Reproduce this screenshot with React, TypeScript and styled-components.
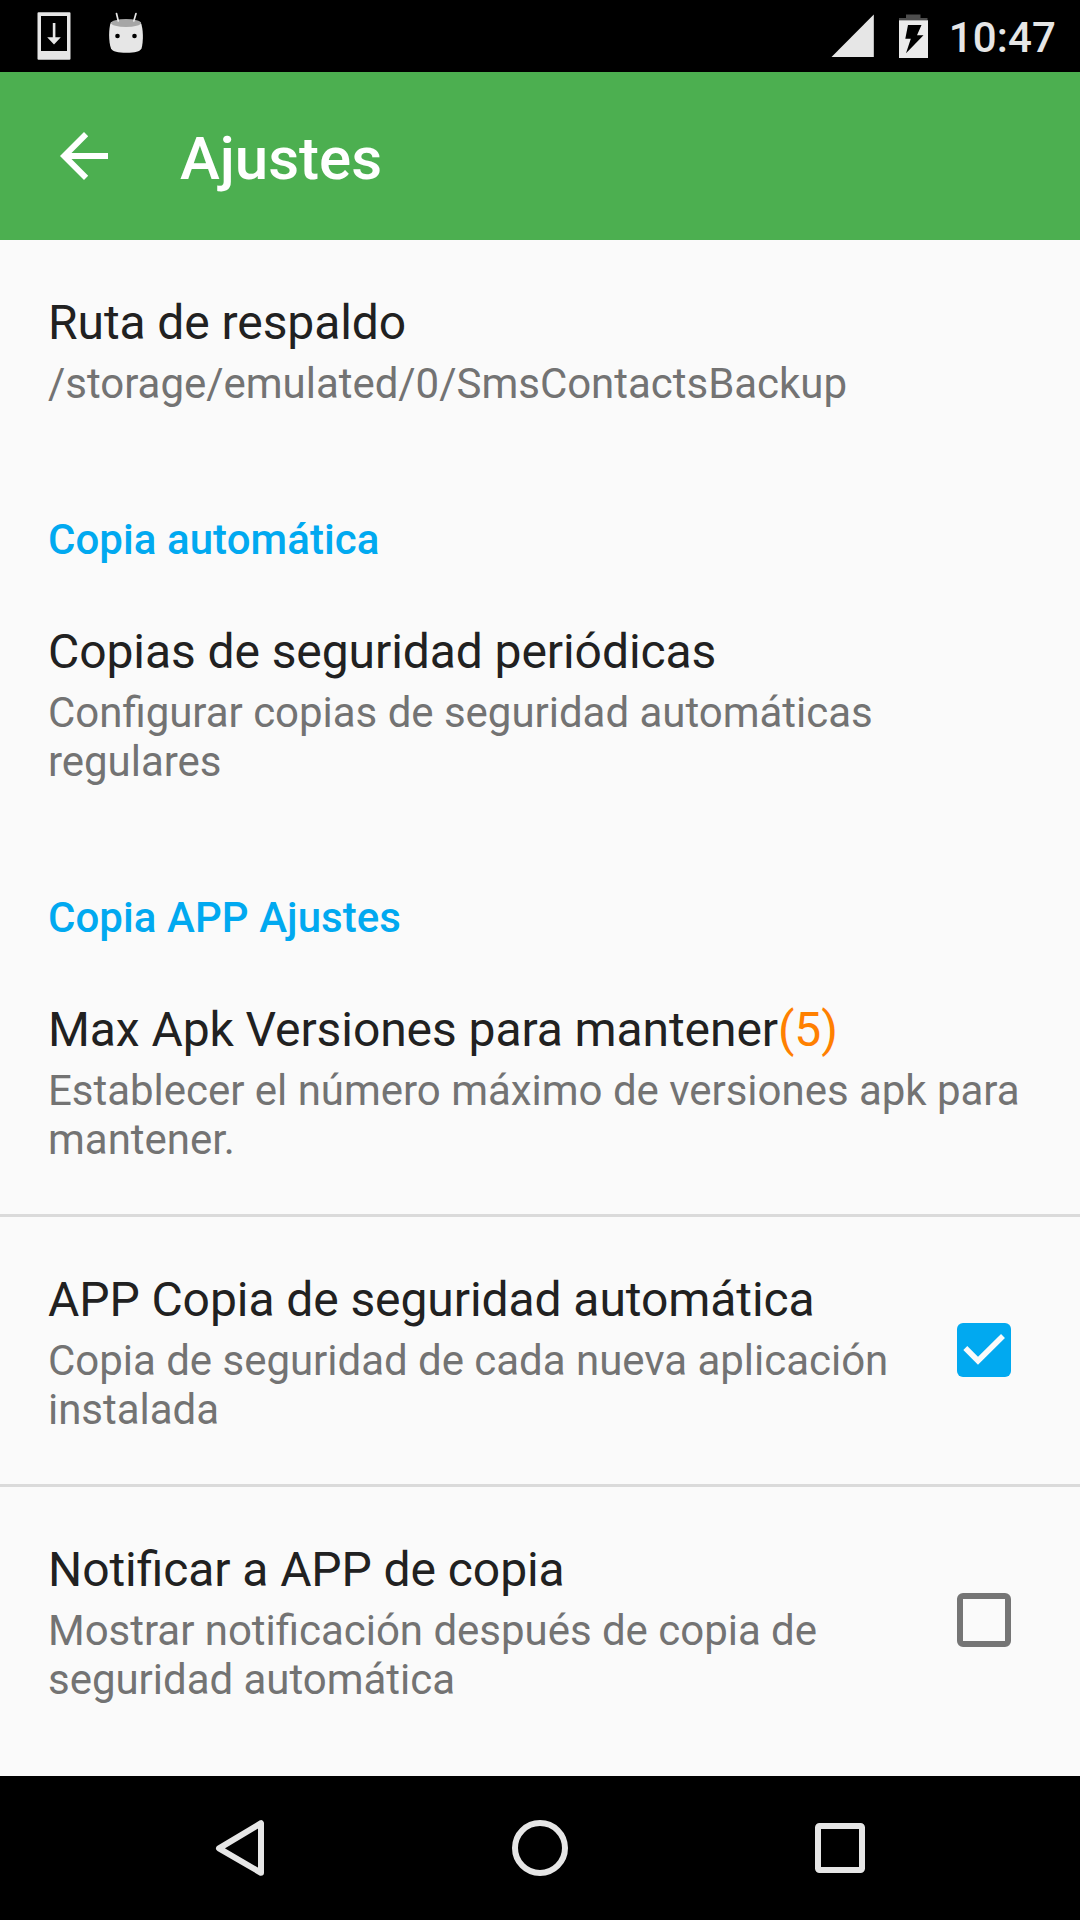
import React from "react";
import styled, { createGlobalStyle } from "styled-components";

const GlobalStyle = createGlobalStyle`
  body {
    margin: 0;
    background: #fafafa;
    font-family: Roboto, "Noto Sans", sans-serif;
    font-feature-settings: "liga" 1;
  }
`;

const Screen = styled.div`
  display: flex;
  flex-direction: column;
  width: 1080px;
  height: 1920px;
  overflow: hidden;
  background: #fafafa;
`;

const StatusBar = styled.header`
  display: flex;
  flex: none;
  align-items: center;
  justify-content: space-between;
  height: 72px;
  background: #000;
  color: #e6e6e6;
`;

const StatusGroup = styled.div`
  display: flex;
  align-items: center;
  height: 72px;
`;

const Clock = styled.span`
  font-size: 42px;
  line-height: 50px;
  font-weight: 500;
  letter-spacing: 0.15px;
  padding: 4px 24px 0 0;
`;

const Icon = styled.svg`
  display: block;
  flex: none;
`;

const Toolbar = styled.div`
  display: flex;
  flex: none;
  align-items: center;
  height: 168px;
  background: #4caf50;
  color: #fff;
`;

const BackButton = styled.button`
  display: flex;
  align-items: center;
  justify-content: center;
  width: 168px;
  height: 168px;
  padding: 0;
  border: 0;
  background: none;
  color: inherit;
`;

const Heading = styled.h1`
  margin: 0 0 0 12px;
  padding-top: 6px;
  font-size: 60px;
  line-height: 70px;
  font-weight: 500;
`;

const List = styled.main`
  flex: 1;
  min-height: 0;
  overflow: hidden;
`;

const Category = styled.h2`
  margin: 0;
  padding: 57px 48px 5px;
  font-size: 42px;
  line-height: 49px;
  font-weight: 500;
  letter-spacing: 0.06px;
  color: #01a9f0;
`;

const Row = styled.section<{ $divided?: boolean }>`
  display: flex;
  align-items: center;
  padding: 54px 48px 50px;
  border-bottom: ${(p) => (p.$divided ? "3px solid #dadada" : "0")};
`;

const RowText = styled.div`
  flex: 1;
`;

const Title = styled.div`
  font-size: 48px;
  line-height: 57px;
  letter-spacing: -0.08px;
  color: #212121;
`;

const Count = styled.span`
  color: #ff8000;
`;

const Summary = styled.div`
  padding-top: 8px;
  font-size: 42px;
  line-height: 49px;
  letter-spacing: -0.025px;
  color: #737373;
`;

const CheckSlot = styled.div`
  display: flex;
  flex: none;
  justify-content: flex-end;
  width: 96px;
  padding: 0 21px 5px 0;
`;

const CheckBox = styled.div<{ $checked: boolean }>`
  box-sizing: border-box;
  width: 54px;
  height: 54px;
  border-radius: 6px;
  border: ${(p) => (p.$checked ? "0" : "6px solid #757575")};
  background: ${(p) => (p.$checked ? "#01a9f0" : "transparent")};
`;

const NavBar = styled.nav`
  display: flex;
  flex: none;
  justify-content: center;
  height: 144px;
  background: #000;
`;

const NavButton = styled.button`
  display: flex;
  align-items: center;
  justify-content: center;
  width: 300px;
  padding: 0;
  border: 0;
  background: none;
`;

type SettingProps = {
  title: string;
  count?: string;
  lines: string[];
  divided?: boolean;
  checked?: boolean;
};

function Setting({ title, count, lines, divided, checked }: SettingProps) {
  return (
    <Row $divided={divided}>
      <RowText>
        <Title>
          {title}
          {count && <Count>{count}</Count>}
        </Title>
        <Summary>
          {lines.map((line) => (
            <div key={line}>{line}</div>
          ))}
        </Summary>
      </RowText>
      {checked !== undefined && (
        <CheckSlot>
          <CheckBox $checked={checked} role="checkbox" aria-checked={checked}>
            {checked && (
              <Icon width="54" height="54" viewBox="0 0 54 54">
                <path d="M8.300 25 21 37.700 46 12.900" fill="none" stroke="#fafafa" strokeWidth="5.600" />
              </Icon>
            )}
          </CheckBox>
        </CheckSlot>
      )}
    </Row>
  );
}

export default function App() {
  return (
    <>
      <GlobalStyle />
      <Screen>
        <StatusBar>
          <StatusGroup>
            <Icon width="160" height="72" viewBox="0 0 160 72">
              <path fill="#e6e6e6" fillRule="evenodd" d="M38.500 12.300h31a1 1 0 0 1 1 1v45.400a1 1 0 0 1-1 1h-31a1 1 0 0 1-1-1V13.300a1 1 0 0 1 1-1ZM41 16v35h26V16Z" />
              <path fill="#e6e6e6" d="M52.800 23h2.600v14.300h5.400L54 44.500l-6.800-7.200h5.600Z" />
              <path fill="#e6e6e6" d="M111 22C108.500 28 108.500 42 111 48.500c1.500 3 7 4.300 15.500 4.300s13.500-1.300 15-4.300c2-6.500 2-20.500-1-26.500Z" />
              <ellipse cx="126" cy="23" rx="15" ry="4" fill="#a6a6a6" />
              <path d="m116.500 13.500 1.800 7.500M136 13.500l-2.200 7.500" stroke="#e6e6e6" strokeWidth="1.700" strokeLinecap="round" />
              <circle cx="117.500" cy="36" r="2.300" />
              <circle cx="134.500" cy="36" r="2.300" />
            </Icon>
          </StatusGroup>
          <StatusGroup>
            <Icon width="119" height="72" viewBox="0 0 119 72">
              <path d="M1.500 57 43.800 14.400V57Z" fill="#e6e6e6" />
              <path d="M69 20v-2h7v-3.500h14.500V18h7v2Z" fill="#4d4d4d" />
              <path d="M69 20.300h29V58H69Z" fill="#ebebeb" />
              <path d="M78 25h13.500l-4.500 10.300h6.500L76 53.300l4.800-14.600h-5.500Z" />
            </Icon>
            <Clock>10:47</Clock>
          </StatusGroup>
        </StatusBar>

        <Toolbar>
          <BackButton aria-label="Atrás">
            <Icon width="48" height="48" viewBox="0 0 48 48">
              <path d="M48 21v6H11.500l16.700 16.800L24 48 0 24 24 0l4.200 4.200L11.500 21Z" fill="#fff" />
            </Icon>
          </BackButton>
          <Heading>Ajustes</Heading>
        </Toolbar>

        <List>
          <Setting title="Ruta de respaldo" lines={["/storage/emulated/0/SmsContactsBackup"]} />
          <Category>Copia automática</Category>
          <Setting
            title="Copias de seguridad periódicas"
            lines={["Configurar copias de seguridad automáticas", "regulares"]}
          />
          <Category>Copia APP Ajustes</Category>
          <Setting
            title="Max Apk Versiones para mantener"
            count="(5)"
            lines={["Establecer el número máximo de versiones apk para", "mantener."]}
            divided
          />
          <Setting
            title="APP Copia de seguridad automática"
            lines={["Copia de seguridad de cada nueva aplicación", "instalada"]}
            divided
            checked
          />
          <Setting
            title="Notificar a APP de copia"
            lines={["Mostrar notificación después de copia de", "seguridad automática"]}
            checked={false}
          />
        </List>

        <NavBar>
          <NavButton aria-label="Atrás">
            <Icon width="60" height="60" viewBox="0 0 60 60">
              <path d="M51 5.200v49.600L9 30.300Z" fill="none" stroke="#e6e6e6" strokeWidth="6" strokeLinejoin="round" />
            </Icon>
          </NavButton>
          <NavButton aria-label="Inicio">
            <Icon width="60" height="60" viewBox="0 0 60 60">
              <circle cx="30" cy="30" r="25" fill="none" stroke="#e6e6e6" strokeWidth="6" />
            </Icon>
          </NavButton>
          <NavButton aria-label="Recientes">
            <Icon width="60" height="60" viewBox="0 0 60 60">
              <rect x="8" y="8" width="44" height="44" rx="1.500" fill="none" stroke="#e6e6e6" strokeWidth="6" />
            </Icon>
          </NavButton>
        </NavBar>
      </Screen>
    </>
  );
}
